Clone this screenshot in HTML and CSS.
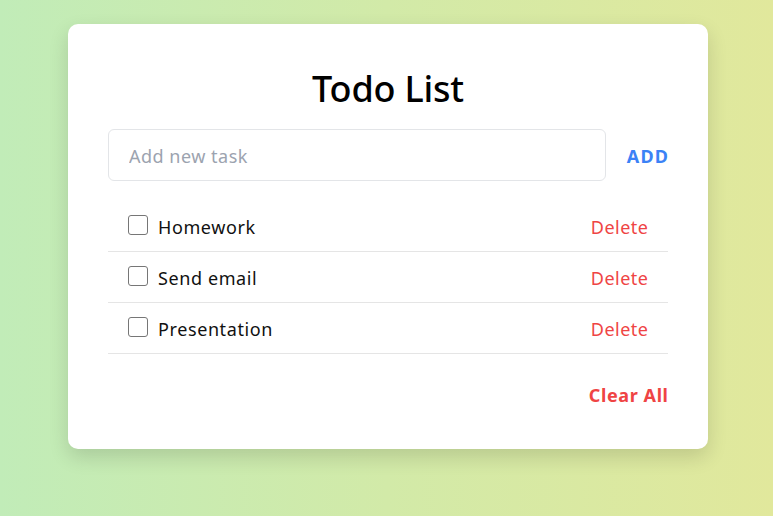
FILE: index.html
```html
<!DOCTYPE html>
<html>
<head>
<meta charset="utf-8">
<link rel="stylesheet" href="styles.css">
</head>
<body>
<div class="card">
  <h1 class="title">Todo List</h1>
  <div class="add-row">
    <input class="task-input" type="text" placeholder="Add new task">
    <button class="add-btn">ADD</button>
  </div>
  <ul class="list">
    <li class="item"><label class="item-label"><input type="checkbox" class="check"><span>Homework</span></label><button class="del">Delete</button></li>
    <li class="item"><label class="item-label"><input type="checkbox" class="check"><span>Send email</span></label><button class="del">Delete</button></li>
    <li class="item"><label class="item-label"><input type="checkbox" class="check"><span>Presentation</span></label><button class="del">Delete</button></li>
  </ul>
  <div class="footer"><button class="clear">Clear All</button></div>
</div>
</body>
</html>
```
FILE: styles.css
```css
* { box-sizing: border-box; }
html, body { height: 100%; }
body {
  margin: 0;
  font-family: "Noto Sans", "Open Sans", sans-serif;
  background: linear-gradient(90deg, #c1ecb8 0%, #d2eaa8 50%, #e1e89c 100%);
  display: flex;
  justify-content: center;
  align-items: flex-start;
  padding-top: 24px;
  padding-left: 3px;
}
.card {
  width: 640px;
  background: #fff;
  border-radius: 10px;
  padding: 40px;
  box-shadow: 0 8px 20px rgba(0,0,0,0.14);
}
.title {
  margin: 0 0 15px;
  text-align: center;
  font-size: 36px;
  font-weight: 500;
  line-height: 50px;
  letter-spacing: -0.2px;
  color: #000;
}
.add-row {
  display: flex;
  align-items: center;
  gap: 21px;
}
.task-input {
  flex: 1;
  height: 52px;
  border: 1px solid #e3e5e8;
  border-radius: 6px;
  padding: 2px 20px 0;
  font-family: inherit;
  font-size: 18px;
  letter-spacing: 0.5px;
  color: #111;
  outline: none;
}
.task-input::placeholder { color: #9ca3af; }
.add-btn {
  border: none;
  background: none;
  padding: 2px 0 0;
  font-family: inherit;
  font-size: 18px;
  font-weight: 700;
  letter-spacing: 1.2px;
  margin-right: -1.2px;
  color: #3b82f6;
}
.list {
  list-style: none;
  margin: 20px 0 0;
  padding: 0;
}
.item {
  display: flex;
  align-items: center;
  justify-content: space-between;
  height: 51px;
  padding: 2px 20px 0;
  border-bottom: 1px solid #e5e5e5;
}
.item-label {
  display: flex;
  align-items: center;
  gap: 10px;
  font-size: 18px;
  letter-spacing: 0.6px;
  color: #111;
}
.check {
  appearance: none;
  -webkit-appearance: none;
  margin: -4px 0 0;
  width: 20px;
  height: 20px;
  border: 1.5px solid #767676;
  border-radius: 3px;
  background: #fff;
}
.del {
  border: none;
  background: none;
  padding: 0;
  font-family: inherit;
  font-size: 18px;
  letter-spacing: 0.5px;
  margin-right: -0.5px;
  color: #ef4444;
}
.footer {
  display: flex;
  justify-content: flex-end;
  margin-top: 27px;
}
.clear {
  border: none;
  background: none;
  padding: 0;
  font-family: inherit;
  font-size: 18px;
  font-weight: 700;
  line-height: 28px;
  letter-spacing: 0.6px;
  margin-right: -0.6px;
  color: #ef4444;
}
```
